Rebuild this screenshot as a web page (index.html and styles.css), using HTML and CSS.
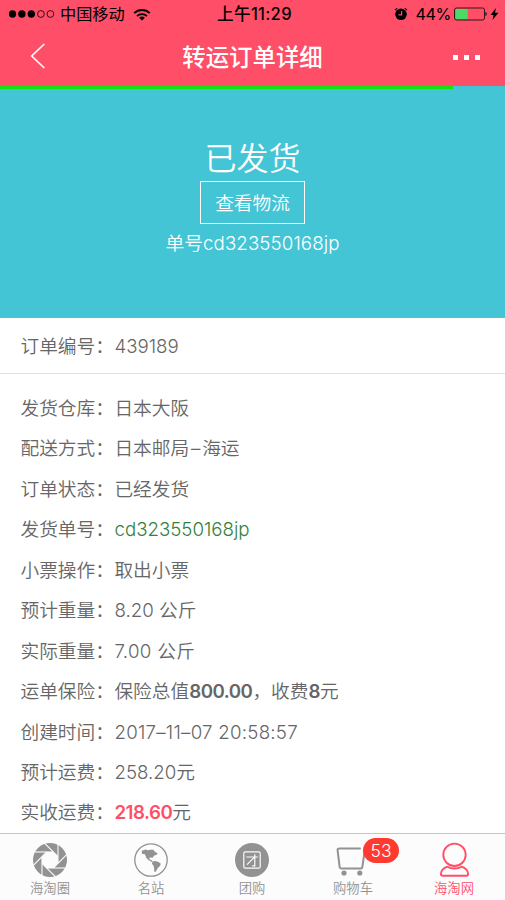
FILE: index.html
```html
<!DOCTYPE html>
<html lang="zh-CN">
<head>
<meta charset="utf-8">
<title>转运订单详细</title>
<link rel="stylesheet" href="styles.css">
</head>
<body>
<header class="top">
  <div class="status">
    <div class="status-left">
      <svg class="signal" width="46" height="8" viewBox="0 0 46 8"><circle cx="3.5" cy="4" r="3.7"/><circle cx="12.9" cy="4" r="3.7"/><circle cx="22.3" cy="4" r="3.7"/><g fill="none" stroke="#000" stroke-width=".8"><circle cx="31.9" cy="4" r="3.4"/><circle cx="41.4" cy="4" r="3.4"/></g></svg>
      <span class="carrier">中国移动</span>
      <svg class="wifi" width="18" height="13" viewBox="0 0 18 13"><g fill="none" stroke="#000" stroke-width="1.9"><path d="M1.2 5.1a11.2 11.2 0 0 1 15.6 0"/><path d="M4 8.1a7.2 7.2 0 0 1 10 0"/></g><path d="M9 12.6 6.1 9.8a4.2 4.2 0 0 1 5.8 0z"/></svg>
    </div>
    <div class="clock">上午11:29</div>
    <div class="status-right">
      <svg class="alarm" width="14" height="14" viewBox="0 0 14 14"><circle cx="7" cy="7.3" r="5.8"/><path d="M1 3.2 3.2 1.2M13 3.2 10.8 1.2" stroke="#000" stroke-width="1.1"/><path d="M7.6 4v3.8H4.5" fill="none" stroke="#ff4f68" stroke-width="1.2"/></svg>
      <span class="percent">44%</span>
      <svg class="battery" width="34" height="14" viewBox="0 0 34 14"><rect x=".5" y="1" width="30" height="12" rx="2" fill="none" stroke="#30171b"/><rect x="1.5" y="2" width="12.3" height="10" rx="1" fill="#4cd964"/><path d="M31.5 5c1.6.4 1.6 3.6 0 4z"/></svg>
      <svg class="bolt" width="9" height="12" viewBox="0 0 9 12"><path d="M6 0 .5 7h3L2.5 12 8.5 4.8H5z"/></svg>
    </div>
  </div>
  <div class="nav">
    <svg class="back" width="16" height="26" viewBox="0 0 16 26"><path d="M14.3 1 1.7 13l12.6 12" fill="none" stroke="#fff" stroke-width="1.6"/></svg>
    <h1 class="title">转运订单详细</h1>
    <svg class="more" width="28" height="5" viewBox="0 0 28 5"><path d="M0 0h5v5H0zM11 0h5v5h-5zM22 0h5v5h-5z" fill="#fff"/></svg>
  </div>
</header>
<section class="hero">
  <div class="progress"></div>
  <h2 class="state">已发货</h2>
  <a class="track">查看物流</a>
  <p class="tracking">单号cd323550168jp</p>
</section>
<main>
  <div class="number"><span>订单编号：</span><span class="value">439189</span></div>
  <div class="details">
    <div class="row"><span>发货仓库：</span><span class="value">日本大阪</span></div>
    <div class="row"><span>配送方式：</span><span class="value">日本邮局<span class="dash">–</span>海运</span></div>
    <div class="row"><span>订单状态：</span><span class="value">已经发货</span></div>
    <div class="row"><span>发货单号：</span><span class="value green">cd323550168jp</span></div>
    <div class="row"><span>小票操作：</span><span class="value">取出小票</span></div>
    <div class="row"><span>预计重量：</span><span class="value">8.20 公斤</span></div>
    <div class="row"><span>实际重量：</span><span class="value weight">7.00 公斤</span></div>
    <div class="row"><span>运单保险：</span><span class="value">保险总值<b>800.00</b>，收费<b>8</b>元</span></div>
    <div class="row"><span>创建时间：</span><span class="value time">2017–11–07 20:58:57</span></div>
    <div class="row"><span>预计运费：</span><span class="value">258.20元</span></div>
    <div class="row"><span>实收运费：</span><span class="value"><b class="price">218.60</b>元</span></div>
  </div>
</main>
<nav class="tabs">
  <a class="tab">
    <svg width="36" height="36" viewBox="0 0 36 36"><defs><path id="blade" d="M21.3 10H1"/></defs><circle cx="18" cy="18" r="17" fill="#929292"/><path d="M14.7 10h6.6l4.7 4.7v6.6L21.3 26h-6.6L10 21.3v-6.6z" fill="#fcfcfc"/><g stroke="#fcfcfc" stroke-width="1.1"><use href="#blade"/><use href="#blade" transform="rotate(45 18 18)"/><use href="#blade" transform="rotate(90 18 18)"/><use href="#blade" transform="rotate(135 18 18)"/><use href="#blade" transform="rotate(180 18 18)"/><use href="#blade" transform="rotate(225 18 18)"/><use href="#blade" transform="rotate(270 18 18)"/><use href="#blade" transform="rotate(315 18 18)"/></g></svg>
    <span>海淘圈</span>
  </a>
  <a class="tab">
    <svg width="36" height="36" viewBox="0 0 36 36"><circle cx="18" cy="18" r="16.2" fill="none" stroke="#929292" stroke-width="1.3"/><path fill="#929292" d="m8.8 8.8 3.8-1.3 2.4.7 2-.5 3.4.1 2 2.4 2.2.7-.8 1.9-2.5.8-2.1 2.3-1.1-.3-1.8.1.3 1.9 1.8.5.8 1.2 1.6.8-.7.5-2.7-1.4-2.4-1.4-1.7-2-.9-2.2-.8-1.5-2.6-.2zM19.7 19.5l2.6-.5 3.2 1.1 2.3 1.7-.8 2.3-2 1.7-2.1 3.8-1.5.5-.3-3.5-.4-2.5-1.8-2.3z"/></svg>
    <span>名站</span>
  </a>
  <a class="tab">
    <svg width="36" height="36" viewBox="0 0 36 36"><circle cx="18" cy="18" r="17" fill="#929292"/><g fill="none" stroke="#fcfcfc" stroke-width="1.2"><rect x="9.8" y="9.8" width="16.4" height="16.4" rx="1.5"/><path d="M12.3 15h11.5M20.8 12.2v11.6h-2.6M20.5 15.2 13 22.7"/></g></svg>
    <span>团购</span>
  </a>
  <a class="tab">
    <svg width="36" height="36" viewBox="0 0 36 36"><path d="M25 6.500H4.4c-1.4 0-2 .7-1.8 2l2 16.2c.2 1.2.8 1.900 2 1.900h18.800c1.200 0 1.900-.7 2-1.900L30 7" fill="none" stroke="#929292" stroke-width="2" stroke-linecap="round" stroke-linejoin="round"/><circle cx="9" cy="31" r="2.6" fill="#929292"/><circle cx="24.8" cy="31" r="2.6" fill="#929292"/></svg>
    <span>购物车</span>
    <i class="badge">53</i>
  </a>
  <a class="tab active">
    <svg width="36" height="36" viewBox="0 0 36 36"><g fill="none" stroke="#ff4f68" stroke-width="1.9" stroke-linejoin="round"><circle cx="18.5" cy="12.8" r="11.2"/><path d="M11.3 24.7c-3.8 1.5-6.4 4-6.4 7.4 0 1.3.5 1.7 1.7 1.7h23.8c1.2 0 1.7-.4 1.7-1.7 0-3.4-2.6-5.9-6.4-7.4-4 2.4-10.4 2.4-14.4 0z"/></g></svg>
    <span>海淘网</span>
  </a>
</nav>
</body>
</html>
```
FILE: styles.css
```css
* { box-sizing: border-box; margin: 0; padding: 0; }
body {
  width: 505px;
  height: 900px;
  overflow: hidden;
  display: flex;
  flex-direction: column;
  background: #fff;
  color: #666;
  font-family: Inter, "Noto Sans CJK SC", sans-serif;
  font-size: 18.7px;
  font-weight: 350;
}
svg { display: block; flex: none; }
.top { height: 86px; background: #ff4f68; flex: none; }
.status {
  display: grid;
  grid-template-columns: 1fr auto 1fr;
  align-items: center;
  height: 28px;
  padding: 0 6px 0 9px;
  color: #000;
  font-size: 16.2px;
  line-height: 28px;
}
.status-left, .status-right { display: flex; align-items: center; }
.status-right { justify-content: flex-end; }
.carrier { margin-left: 5px; font-weight: 400; }
.wifi { margin-left: 8px; }
.clock { font-weight: 500; font-size: 16.6px; letter-spacing: .3px; padding-left: 1px; }
.percent { margin: 0 3px 0 7px; font-weight: 400; letter-spacing: -.4px; }
.bolt { margin-left: 2px; }
.nav {
  display: flex;
  align-items: center;
  justify-content: space-between;
  height: 58px;
  padding: 0 24px 2px 30px;
}
.title { color: #fff; font-size: 23.4px; font-weight: 500; line-height: 56px; padding: 3px 0 0 6px; }
.more { margin-top: 3px; }
.hero {
  height: 232px;
  flex: none;
  display: flex;
  flex-direction: column;
  align-items: center;
  background: #43c5d6;
  color: #fff;
}
.progress { width: 453px; height: 3px; background: #11e311; align-self: flex-start; }
.state { margin-top: 48px; height: 44px; font-size: 32px; line-height: 43px; font-weight: 350; }
.track {
  width: 105px;
  height: 43px;
  border: 1px solid #fff;
  text-align: center;
  line-height: 43px;
}
.tracking { line-height: 39px; letter-spacing: .1px; }
main { flex: 1; min-height: 0; overflow: hidden; }
.number { display: flex; height: 56px; line-height: 57px; padding-left: 20.5px; border-bottom: 1px solid #e2e2e2; }
.details { padding: 14px 0 0 20.5px; }
.row { display: flex; height: 40.45px; line-height: 41.5px; }
.value { white-space: pre; padding-left: .5px; }
.dash { display: inline-block; width: 13px; text-align: center; }
.weight { letter-spacing: .3px; }
.time { letter-spacing: .25px; }
.green { color: #35803a; }
b { font-weight: 600; letter-spacing: -.5px; }
.price { color: #ff4f68; }
.tabs {
  display: flex;
  height: 67px;
  flex: none;
  border-top: 1px solid #c4c4c4;
  background: #fcfcfc;
  color: #929292;
}
.tab {
  position: relative;
  flex: 1;
  display: flex;
  flex-direction: column;
  align-items: center;
  padding: 8px 1px 0 0;
  font-size: 13.3px;
  line-height: 20px;
}
.active { color: #ff4f68; }
.badge {
  position: absolute;
  left: 60px;
  top: 4px;
  width: 36px;
  height: 25px;
  border-radius: 13px;
  background: #ff3b30;
  color: #fff;
  font-size: 17.5px;
  font-style: normal;
  line-height: 25px;
  text-align: center;
}
```
